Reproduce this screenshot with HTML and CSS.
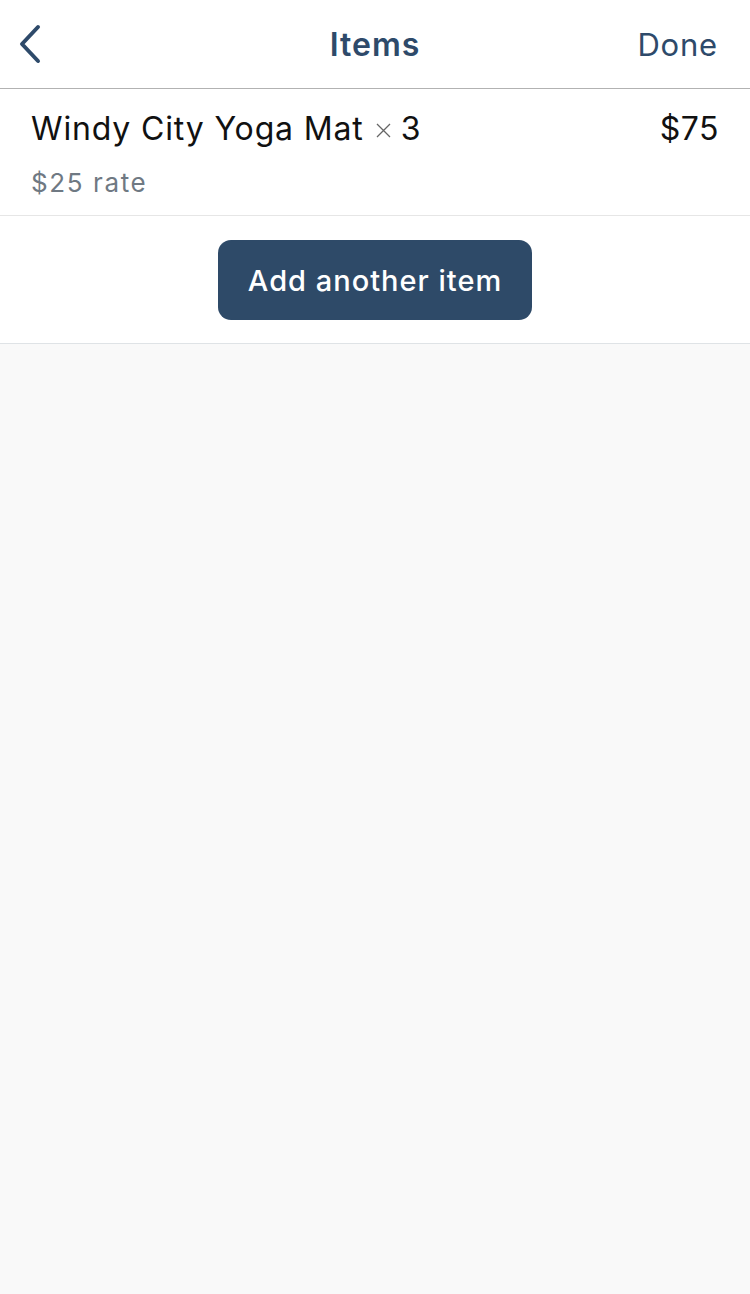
FILE: index.html
```html
<!DOCTYPE html>
<html>
<head>
<meta charset="utf-8">
<link rel="stylesheet" href="styles.css">
</head>
<body>
<header class="nav">
  <button class="back" aria-label="Back">
    <svg width="26" height="40" viewBox="0 0 26 40"><path d="M22 3 L6 20 L22 37" fill="none" stroke="#2e4a6a" stroke-width="4" stroke-linecap="round" stroke-linejoin="round"/></svg>
  </button>
  <h1 class="title">Items</h1>
  <span class="done">Done</span>
</header>
<section class="list">
  <div class="item">
    <div class="item-main">
      <div class="item-name">Windy City Yoga Mat<span class="times" aria-label="times"><svg width="15" height="15" viewBox="0 0 15 15"><path d="M1 1 L14 14 M14 1 L1 14" stroke="#666" stroke-width="1.3" fill="none"/></svg></span>3</div>
      <div class="item-rate">$25 rate</div>
    </div>
    <div class="item-price">$75</div>
  </div>
  <div class="actions">
    <button class="add">Add another item</button>
  </div>
</section>
<main class="rest"></main>
</body>
</html>
```

FILE: styles.css
```css
html, body {
  margin: 0;
  padding: 0;
}
body {
  font-family: Inter, "Noto Sans", sans-serif;
  background: #f9f9f9;
  height: 1294px;
  width: 750px;
  display: flex;
  flex-direction: column;
}
.nav {
  height: 88px;
  border-bottom: 1px solid #b2b2b2;
  background: #fff;
  display: flex;
  align-items: center;
  justify-content: space-between;
  padding: 0 32px 0 16px;
  position: relative;
  box-sizing: content-box;
}
.back {
  border: 0;
  background: none;
  padding: 0;
  width: 30px;
  height: 40px;
  display: flex;
  align-items: center;
}
.title {
  margin: 0;
  position: absolute;
  left: 0;
  right: 0;
  text-align: center;
  font-size: 32px;
  font-weight: 600;
  color: #2e4a6a;
  letter-spacing: 1px;
  pointer-events: none;
}
.done {
  font-size: 31px;
  color: #2e4a6a;
  letter-spacing: 0.8px;
}
.list {
  background: #fff;
  border-bottom: 1px solid #dfe3e6;
}
.item {
  display: flex;
  justify-content: space-between;
  padding: 18px 31px 0 31px;
  height: 108px;
  border-bottom: 1px solid #e6e6e6;
}
.item-name {
  font-size: 32px;
  color: #111;
  line-height: 44px;
  letter-spacing: 0.85px;
  display: flex;
  align-items: center;
}
.times {
  display: inline-flex;
  margin: 3px 10px 0 12px;
}
.item-rate {
  margin-top: 16px;
  font-size: 26px;
  color: #6f7983;
  line-height: 32px;
  letter-spacing: 1.6px;
}
.item-price {
  font-size: 32px;
  color: #111;
  line-height: 44px;
  letter-spacing: 0.5px;
}
.actions {
  display: flex;
  justify-content: center;
  padding: 24px 0 23px;
}
.add {
  width: 314px;
  height: 80px;
  border: 0;
  border-radius: 13px;
  background: #2e4a68;
  color: #fff;
  font-family: Inter, "Noto Sans", sans-serif;
  font-size: 29px;
  font-weight: 500;
  letter-spacing: 1px;
}
.rest {
  flex: 1;
}
```
